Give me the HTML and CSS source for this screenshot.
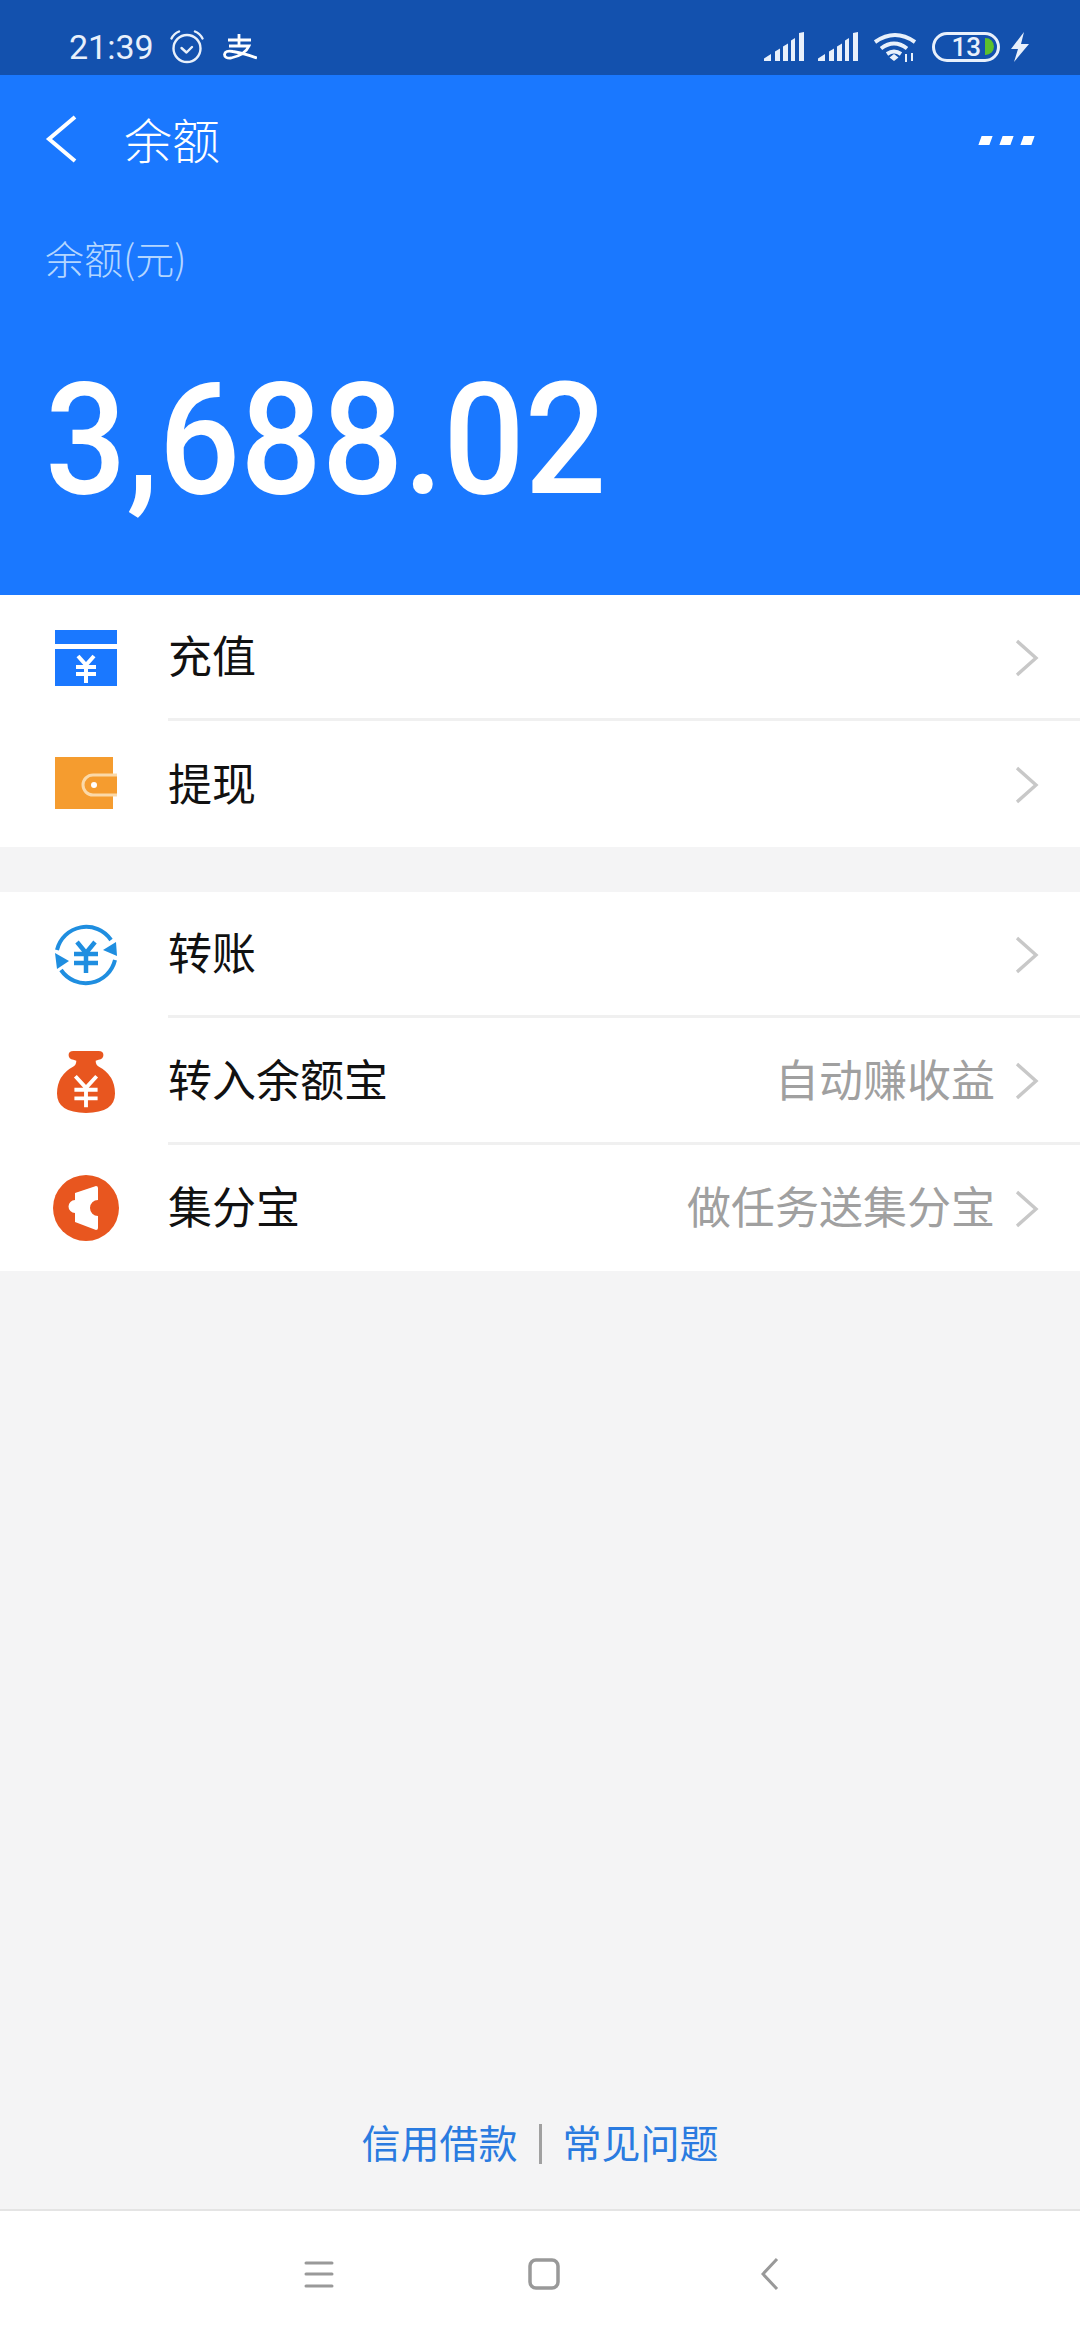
FILE: index.html
```html
<!DOCTYPE html>
<html lang="zh-CN">
<head>
  <meta charset="UTF-8">
  <meta name="viewport" content="width=device-width, initial-scale=1.0">
  <title>余额</title>
  <link rel="stylesheet" href="styles.css">
</head>
<body>
  <div class="screen">
    <div class="status-bar">
      <div class="status-left">
        <span class="clock">21:39</span>
        <svg class="alarm" width="34" height="34" viewBox="0 0 34 34" fill="none" stroke="#e8f0fb" stroke-width="2.4" stroke-linecap="round" stroke-linejoin="round">
          <circle cx="17" cy="18.5" r="13.5"/>
          <path d="M11.5 18l5 4.5 5.5-5.5"/>
          <path d="M1.5 8.5Q4 3.500 9 1.500M32.500 8.500Q30 3.500 25 1.500"/>
        </svg>
        <svg class="alipay" width="34" height="26" viewBox="0 0 34 26" fill="none" stroke="#fff" stroke-width="2.800">
          <path d="M5 6H28M16 0v11M6 12H26Q22 21 8 24Q1.500 24.500 1.500 20.500Q2 16 10 17.500Q20 19 34 24"/>
        </svg>
      </div>
      <div class="status-right">
        <svg width="40" height="29" viewBox="0 0 40 29" fill="#e8f0fb">
          <path d="M0 29v-2.500L7 22v7zM11 29V19.500l5-3V29zM19 29V14.500l5-3V29zM27 29V8.500l4-2.500v23zM35 29V1l5-1v29z"/>
        </svg>
        <svg width="40" height="29" viewBox="0 0 40 29" fill="#e8f0fb">
          <path d="M0 29v-2.500L7 22v7zM11 29V19.500l5-3V29zM19 29V14.500l5-3V29zM27 29V8.500l4-2.500v23zM35 29V1l5-1v29z"/>
        </svg>
        <svg class="wifi" width="42" height="30" viewBox="0 0 42 30" fill="none" stroke="#e8f0fb" stroke-width="4">
          <path d="M1 10Q21-4 41 10M7 16.500Q20 6.500 33 16.500M13 22Q20 17 27 22"/>
          <path d="M15.500 25.500L20 22l4.500 3.500L20 29z" fill="#e8f0fb" stroke="none"/>
          <path d="M32 22v8M38 21v8" stroke-width="2"/>
        </svg>
        <div class="battery">
          <span class="battery-num">13</span>
          <span class="battery-fill"></span>
        </div>
        <svg class="bolt" width="20" height="30" viewBox="0 0 20 30" fill="#e8f0fb">
          <path d="M14 0L1 17h7L4 30l15-18h-8z"/>
        </svg>
      </div>
    </div>

    <div class="hero">
      <div class="topbar">
        <svg class="back" width="32" height="48" viewBox="0 0 32 48" fill="none" stroke="#fff" stroke-width="4">
          <path d="M30 2L4 24l26 22"/>
        </svg>
        <h1>余额</h1>
        <div class="more"><i></i><i></i><i></i></div>
      </div>
      <div class="balance-label">余额(元)</div>
      <div class="balance">3,688.02</div>
    </div>

    <div class="group">
      <div class="row">
        <div class="row-icon">
          <svg width="62" height="56" viewBox="0 0 62 56">
            <path d="M0 0h62v14H0zM0 19h62v37H0z" fill="#1a78ff"/>
            <path d="M23 26l8 9 8-9M21 37h20M21 44h20M31 35v18" fill="none" stroke="#fff" stroke-width="4"/>
          </svg>
        </div>
        <div class="row-body">
          <span class="row-title">充值</span>
          <svg class="chevron" width="24" height="38" viewBox="0 0 24 38" fill="none" stroke="#c8c8c8" stroke-width="3.400"><path d="M2 2l19 17L2 36"/></svg>
        </div>
      </div>
      <div class="row">
        <div class="row-icon">
          <svg width="62" height="54" viewBox="0 0 62 54">
            <path d="M0 0h58v52H0z" fill="#f59c2f"/>
            <path d="M62 18H38a10 10 0 0 0 0 20h24" fill="#f59c2f" stroke="#fbd9a8" stroke-width="3"/>
            <circle cx="39" cy="28" r="3" fill="#fff"/>
          </svg>
        </div>
        <div class="row-body no-line">
          <span class="row-title">提现</span>
          <svg class="chevron" width="24" height="38" viewBox="0 0 24 38" fill="none" stroke="#c8c8c8" stroke-width="3.400"><path d="M2 2l19 17L2 36"/></svg>
        </div>
      </div>
    </div>

    <div class="group second">
      <div class="row">
        <div class="row-icon">
          <svg width="64" height="64" viewBox="0 0 64 64">
            <g fill="none" stroke="#1f8ee0" stroke-width="4">
              <path d="M3 27A30 30 0 0 1 57 17M61 37A30 30 0 0 1 7 47"/>
              <path d="M23 19l9 11 9-11M20 31h24M20 40h24M32 30v20" stroke-width="4.500"/>
            </g>
            <path d="M49 27l13-8 1 14zM15 38L1 30l2 16z" fill="#1f8ee0"/>
          </svg>
        </div>
        <div class="row-body">
          <span class="row-title">转账</span>
          <svg class="chevron" width="24" height="38" viewBox="0 0 24 38" fill="none" stroke="#c8c8c8" stroke-width="3.400"><path d="M2 2l19 17L2 36"/></svg>
        </div>
      </div>
      <div class="row">
        <div class="row-icon">
          <svg width="58" height="64" viewBox="0 0 60 66">
            <path d="M17 1h26q5 0 5 4t-5 5l-3 1q0 4 3 6 17 9 17 28 0 20-30 20T0 45q0-19 17-28 3-2 3-6l-3-1q-5-1-5-5t5-4z" fill="#e8561f"/>
            <path d="M19 27l11 12 11-12M18 41h24M18 50h24M30 39v20" fill="none" stroke="#fff" stroke-width="4"/>
          </svg>
        </div>
        <div class="row-body">
          <span class="row-title">转入余额宝</span>
          <span class="row-hint">自动赚收益</span>
          <svg class="chevron" width="24" height="38" viewBox="0 0 24 38" fill="none" stroke="#c8c8c8" stroke-width="3.400"><path d="M2 2l19 17L2 36"/></svg>
        </div>
      </div>
      <div class="row">
        <div class="row-icon">
          <svg width="66" height="66" viewBox="0 0 66 66">
            <circle cx="33" cy="33" r="33" fill="#e8561f"/>
            <path d="M22 18L43 11q2 0 2 2V25a8 8 0 0 0 0 16V53q0 2-2 2L22 47V38a6.500 6.500 0 0 1 0-13z" fill="#fff"/>
          </svg>
        </div>
        <div class="row-body no-line">
          <span class="row-title">集分宝</span>
          <span class="row-hint">做任务送集分宝</span>
          <svg class="chevron" width="24" height="38" viewBox="0 0 24 38" fill="none" stroke="#c8c8c8" stroke-width="3.400"><path d="M2 2l19 17L2 36"/></svg>
        </div>
      </div>
    </div>

    <div class="links">
      <a>信用借款</a>
      <span class="links-sep"></span>
      <a>常见问题</a>
    </div>

    <div class="navbar">
      <svg width="30" height="30" viewBox="0 0 30 30" fill="none" stroke="#999" stroke-width="3" stroke-linecap="round"><path d="M2 4h26M2 15h26M2 27h26"/></svg>
      <svg class="nav-home" width="32" height="32" viewBox="0 0 32 32" fill="none" stroke="#999" stroke-width="3.500"><rect x="2" y="2" width="28" height="28" rx="6"/></svg>
      <svg width="18" height="34" viewBox="0 0 18 34" fill="none" stroke="#999" stroke-width="3"><path d="M16 2L2 17l14 15"/></svg>
    </div>
  </div>
</body>
</html>
```

FILE: styles.css
```css
* {
  margin: 0;
  padding: 0;
  box-sizing: border-box;
  font-family: "Noto Sans CJK SC", "Noto Sans", sans-serif;
}

body {
  background-color: #f4f4f5;
}

.screen {
  width: 1080px;
  height: 2340px;
  display: flex;
  flex-direction: column;
  overflow: hidden;
}

.status-bar {
  height: 75px;
  background-color: #1351ae;
  display: flex;
  justify-content: space-between;
  align-items: center;
  padding: 18px 50px 0 69px;
}

.status-left {
  display: flex;
  align-items: center;
}

.clock {
  font-family: Roboto, sans-serif;
  font-size: 34px;
  color: #e8f0fb;
  width: 101px;
}

.alipay {
  margin-left: 19px;
}

.status-right {
  display: flex;
  align-items: center;
  gap: 14px;
}

.wifi {
  margin-left: 2px;
}

.battery {
  width: 68px;
  height: 30px;
  border: 3px solid #e8f0fb;
  border-radius: 15px;
  margin-left: 2px;
  display: flex;
  align-items: center;
  justify-content: flex-end;
  padding-right: 3px;
}

.battery-num {
  font-family: Roboto, sans-serif;
  font-weight: 500;
  font-size: 26px;
  color: #e8f0fb;
  margin-right: 4px;
}

.battery-fill {
  width: 9px;
  height: 17px;
  background-color: #5cc02c;
  border-radius: 0 9px 9px 0;
}

.bolt {
  margin-left: -4px;
}

.hero {
  height: 520px;
  background-color: #1a78ff;
  padding: 0 45px;
}

.topbar {
  height: 130px;
  display: flex;
  align-items: center;
}

.back {
  margin: 0 47px 2px 0;
  flex-shrink: 0;
}

.topbar h1 {
  font-size: 48px;
  font-weight: 300;
  color: #fff;
  flex: 1;
  margin-bottom: 5px;
}

.more {
  display: flex;
  gap: 10px;
  margin-right: 2px;
}

.more i {
  width: 11px;
  height: 9px;
  background-color: #fff;
  transform: skewX(-20deg);
}

.balance-label {
  margin-top: 24px;
  font-size: 39px;
  line-height: 56px;
  font-weight: 300;
  color: #b4d6ff;
}

.balance {
  margin-top: 70px;
  font-family: Roboto, sans-serif;
  font-weight: 500;
  font-size: 156px;
  line-height: 170px;
  color: #fff;
  transform: scaleX(0.92);
  transform-origin: left center;
}

.group {
  background-color: #fff;
}

.group.second {
  margin-top: 45px;
}

.row {
  height: 126px;
  display: flex;
  align-items: center;
}

.group.second .row {
  height: 126.4px;
}

.row-icon {
  width: 168px;
  padding-left: 4px;
  display: flex;
  justify-content: center;
  flex-shrink: 0;
}

.row-body {
  flex: 1;
  height: 100%;
  display: flex;
  align-items: center;
  border-bottom: 3px solid #f0f0f0;
  padding-right: 41px;
}

.row-body.no-line {
  border-bottom: none;
}

.row-title {
  font-size: 44px;
  color: #111;
  flex: 1;
  margin-bottom: 5px;
}

.row-hint {
  font-size: 44px;
  color: #a0a0a0;
  margin: 0 20px 5px 0;
}

.chevron {
  margin-top: 2px;
}

.links {
  margin-top: auto;
  height: 101px;
  padding-bottom: 37px;
  display: flex;
  justify-content: center;
  align-items: center;
  gap: 21px;
  font-size: 39px;
  color: #2a7be0;
  border-bottom: 2px solid #e4e4e4;
}

.links-sep {
  width: 3px;
  height: 40px;
  margin-top: 6px;
  background-color: #a0a0a0;
}

.navbar {
  height: 129px;
  background-color: #fff;
  display: flex;
  align-items: center;
  padding: 0 0 4px 304px;
}

.nav-home {
  margin: 0 201px 0 194px;
}
```
